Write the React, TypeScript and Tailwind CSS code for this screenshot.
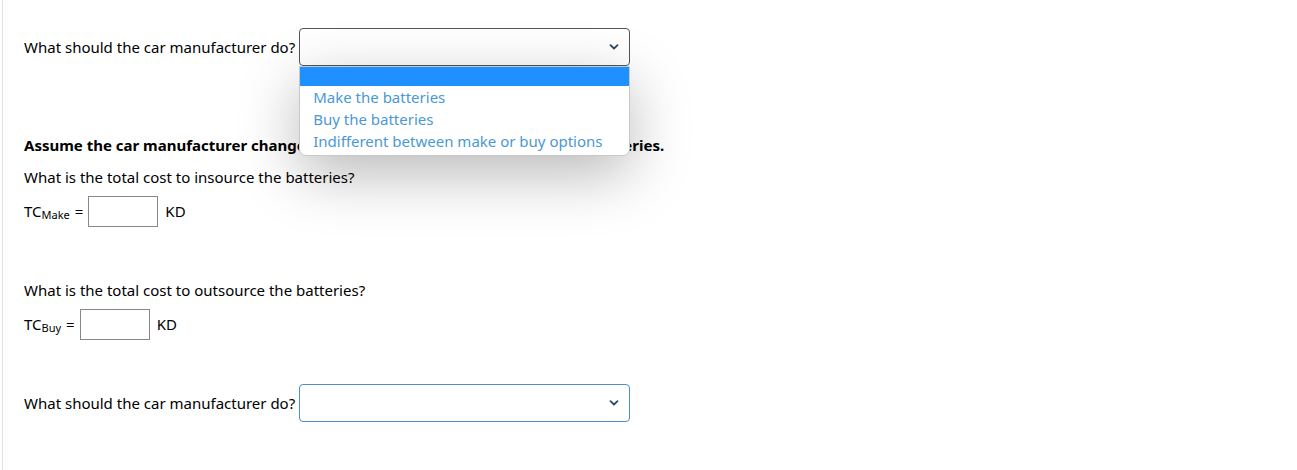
import React from 'react';

function Chevron({ className }: { className: string }) {
    return (
        <svg className={className} viewBox="0 0 10 6" fill="none" stroke="currentColor" strokeWidth={1.8} strokeLinecap="round" strokeLinejoin="round">
            <path d="M1.5 1.2 L5 4.5 L8.5 1.2" />
        </svg>
    );
}

function Select({ open, focused }: { open?: boolean; focused?: boolean }) {
    return (
        <div className="relative">
            <div
                className={`flex h-[38px] w-[331px] items-center justify-end rounded-[4px] border bg-white pr-[10px] ${
                    focused ? 'border-[#4a90cc]' : 'border-[#555]'
                }`}
            >
                <Chevron className="h-[6px] w-[10px] text-[#2d4a60]" />
            </div>
            {open && (
                <div className="absolute left-0 top-[38px] z-10 w-[331px] overflow-hidden rounded-b-[7px] border border-[#c8c8c8] bg-white pb-[3px] shadow-[0_18px_60px_rgba(0,0,0,0.28)]">
                    <div className="h-[19px] bg-[#1e90ff]"></div>
                    <ul className="pl-[13px] text-[15px] leading-[22px] text-[#4a98d6]">
                        <li>Make the batteries</li>
                        <li>Buy the batteries</li>
                        <li>Indifferent between make or buy options</li>
                    </ul>
                </div>
            )}
        </div>
    );
}

function CostRow({ sub }: { sub: string }) {
    return (
        <div className="flex items-center">
            <span>
                TC<sub className="relative top-[2px] align-baseline text-[11px]">{sub}</sub>
            </span>
            <span className="ml-[5px]">=</span>
            <div className="ml-[5px] h-[31px] w-[70px] border border-[#888] bg-white"></div>
            <span className="ml-[7px]">KD</span>
        </div>
    );
}

export default function App() {
    return (
        <div className="h-[470px] w-[1297px] bg-white font-['Noto_Sans',sans-serif] text-[15px] text-black">
            <div className="ml-[2px] h-full border-l border-[#e2e2ea] pl-[21px] pt-[28px]">
                <div className="flex items-center">
                    <span className="mr-[4px]">What should the car manufacturer do?</span>
                    <Select open />
                </div>

                <p className="mt-[69px] font-bold leading-[20px]">
                    Assume the car manufacturer changes its production quantity to 15,000 car batteries.
                </p>
                <p className="mt-[12px] leading-[20px]">What is the total cost to insource the batteries?</p>
                <div className="mt-[9px]">
                    <CostRow sub="Make" />
                </div>

                <p className="mt-[53px] leading-[20px]">What is the total cost to outsource the batteries?</p>
                <div className="mt-[9px]">
                    <CostRow sub="Buy" />
                </div>

                <div className="mt-[44px] flex items-center">
                    <span className="mr-[4px]">What should the car manufacturer do?</span>
                    <Select focused />
                </div>
            </div>
        </div>
    );
}
